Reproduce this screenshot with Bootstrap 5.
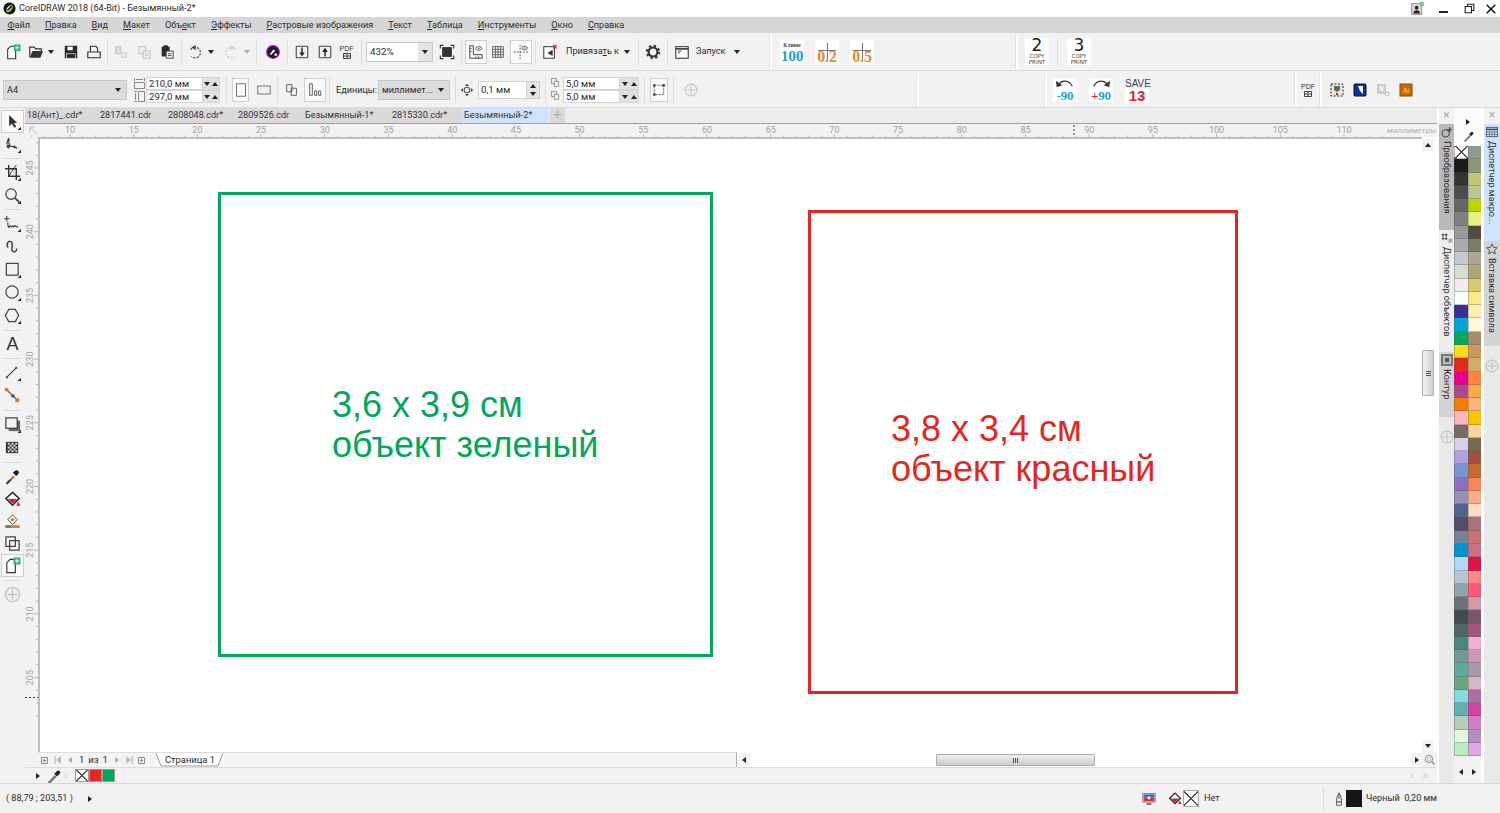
<!DOCTYPE html>
<html lang="ru">
<head>
<meta charset="utf-8">
<title>CorelDRAW 2018</title>
<link href="https://cdn.jsdelivr.net/npm/bootstrap@5.3.0/dist/css/bootstrap.min.css" rel="stylesheet">
<style>
html,body{height:813px;overflow:hidden;background:#f2f2f2}
body{font-family:Roboto,"Noto Sans",sans-serif;font-size:9.1px;line-height:1.15;color:#2a2a2a}
.ap-shell{height:813px;width:1500px}
.ap-title{height:17px;background:#fff;color:#2a2a2a;flex:none}
.ap-menu{height:16px;background:#d6d6d6;flex:none}
.ap-menu span{padding:0 7.5px;color:#2e2e2e}
.ap-menu u{text-underline-offset:1px}
.ap-tb{height:38px;background:#f2f2f2;border-bottom:1px solid #dcdcdc;flex:none}
.ap-tb2{height:37px;padding-top:2px}
.ap-i{display:flex;align-items:center;justify-content:center;flex:none;height:23px}
.ap-i svg{width:16px;height:16px;overflow:visible}
.ap-boxed{border:1px solid #cfcfcf;background:#fafafa;height:24px}
.ap-arrow{width:0;height:0;border-left:3px solid transparent;border-right:3px solid transparent;border-top:4px solid #222}
.ap-arrow-up{width:0;height:0;border-left:3px solid transparent;border-right:3px solid transparent;border-bottom:4px solid #222}
.ap-right{width:0;height:0;border-top:3px solid transparent;border-bottom:3px solid transparent;border-left:4px solid #222;flex:none}
.ap-left{width:0;height:0;border-top:3px solid transparent;border-bottom:3px solid transparent;border-right:4px solid #222}
.ap-sep{flex:none;height:26px;background:linear-gradient(#dcdcdc,#dcdcdc) center/1px 100% no-repeat}
.ap-grip{flex:none;width:3px;height:34px;background:#fff;border-left:1px solid #e4e4e4}
.ap-combo{height:20px;background:#fff;border:1px solid #c9c9c9;display:flex;align-items:center;flex:none;padding-left:3px;font-size:9.8px}
.ap-combo b{font-weight:400;flex:1}
.ap-combo i{width:14px;height:100%;background:#e4e4e4;display:flex;align-items:center;justify-content:center}
.ap-select{height:20px;background:#dcdcdc;border:1px solid #c9c9c9;display:flex;align-items:center;justify-content:space-between;padding:0 5px 0 3px;flex:none}
.ap-field{flex:none;background:#fff;height:13px;padding-left:2px;display:flex;align-items:center;border:1px solid #d4d4d4;font-size:9.6px}
.ap-spin{flex:none;height:13px;display:flex;align-items:center;justify-content:space-around;background:#e0e0e0;border:1px solid #d4d4d4;border-left:0}
.ap-spinv{flex:none;height:26px;display:flex;flex-direction:column;align-items:center;justify-content:space-around;background:#e4e4e4;border:1px solid #cfcfcf;border-left:0}
.ap-icon-cell{flex:none;width:24px;height:24px;background:#fff;position:relative;text-align:center}
.ap-copycell{height:27px}
.ap-serif{font-family:"Liberation Serif",serif;font-weight:700}
.ap-tiny{font-family:"Liberation Serif",serif;font-size:5.5px;line-height:6px;font-weight:700;color:#444;display:block;padding-top:2px}
.ap-big{font-size:15.5px;line-height:15px;color:#1ba1e2;display:block;margin-top:0;letter-spacing:-.2px}
.ap-orange{font-size:16px;line-height:15px;color:#f4861f;position:absolute;left:0;right:0;bottom:0;letter-spacing:-.2px}
.ap-cross{position:absolute;left:3px;right:3px;top:10px;height:1px;background:#777}
.ap-cross::after{content:"";position:absolute;left:9px;top:-7px;width:1px;height:18px;background:#777}
.ap-copy-n{font-family:"DejaVu Sans",sans-serif;font-size:17px;color:#222;display:block;height:15px;line-height:15px}
.ap-copy-t{font-family:"DejaVu Sans",sans-serif;font-size:5.6px;line-height:6px;color:#444;display:block}
.ap-rot{font-size:13px;line-height:13px;color:#1ba1e2;position:absolute;left:0;right:0;bottom:0;letter-spacing:-.2px}
.ap-save{font-family:"Liberation Sans",sans-serif;font-size:10px;line-height:11px;color:#444;display:block}
.ap-save13{font-family:"Liberation Sans",sans-serif;font-weight:700;font-size:15px;line-height:14px;color:#e8212e;background:#fff;display:block}
.ap-main{height:675px;flex:none}
.ap-tools{width:25px;flex:none;padding-top:2px;background:#f2f2f2}
.ap-tools .ap-i{width:25px}
.ap-tools .ap-i svg{width:17px;height:17px}
.ap-tools .ap-boxed{width:23px;height:23px;margin:0 auto}
.ap-t22{height:22px}
.ap-hsep{height:5px;flex:none;background:linear-gradient(#dcdcdc,#dcdcdc) center/17px 1px no-repeat}
.ap-hsep6{height:6px}
.ap-center{width:1412px;flex:none}
.ap-tabs{height:16px;background:#ececec;border-bottom:1px solid #56b5ee;flex:none}
.ap-tab{height:15px;flex:none;background:#d9d9d9;padding-left:2px;display:flex;align-items:center;color:#333;white-space:nowrap}
.ap-tab-on{background:#cfe3fb}
.ap-tab-add{width:15px;justify-content:center;margin-left:1px;padding:0;color:#aaa;font-size:14px}
.ap-ruler{height:13px;flex:none;background:#f2f2f2;display:block}
.ap-canvasrow{height:615px;flex:none}
.ap-vr{width:13px;flex:none;display:block;background:#f2f2f2}
.ap-canvas{width:1384px;flex:none;background:#fff;border-top:2px solid #bdbdbd;border-left:2px solid #bdbdbd;position:relative}
.ap-obj{position:absolute;border:3px solid;background:transparent}
.ap-obj-g{border-color:#00a85a;left:178px;top:53px;width:495px;height:465px}
.ap-obj-r{border-color:#e3281e;left:768px;top:71px;width:430px;height:484px}
.ap-label{position:absolute;font-family:"Liberation Sans",Arial,sans-serif;font-size:36px;line-height:40px;white-space:nowrap}
.ap-label-g{color:#00a85a;left:292px;top:246px}
.ap-label-r{color:#e3281e;left:851px;top:270px}
.ap-vscroll{width:15px;flex:none;background:#fff;position:relative}
.ap-sbtn{position:absolute;left:0;width:12px;height:12px;background:#f2f2f2;display:flex;align-items:center;justify-content:center}
.ap-sb-up{top:2px}.ap-sb-dn{bottom:0}
.ap-vthumb{position:absolute;left:0;top:213px;width:12px;height:46px;background:linear-gradient(90deg,#f4f4f4,#cfcfcf);border:1px solid #aeaeae;border-radius:1px;display:flex;align-items:center;justify-content:center}
.ap-grip3{width:5px;height:5px;background:repeating-linear-gradient(90deg,#555 0 1px,transparent 1px 2px)}
.ap-grip3v{background:repeating-linear-gradient(0deg,#555 0 1px,transparent 1px 2px)}
.ap-pager{height:15px;flex:none;background:#f2f2f2}
.ap-pagerl{width:699px;margin-left:13px;padding-left:1px;background:#f4f4f4;border-right:1px solid #aaa;border-top:1px solid #ddd;flex:none;color:#2a2a2a}
.ap-pgi{width:12.5px;flex:none;display:flex;align-items:center;justify-content:center;height:14px;color:#bbb}
.ap-pgtxt{font-size:9.6px;width:34px;flex:none;text-align:center;word-spacing:1.5px}
.ap-pagetab{position:relative;width:68px;flex:none;margin-left:8px;text-align:center;height:14px;background:#fff;line-height:13px;font-size:9.4px}
.ap-pagetab svg{position:absolute;left:0;top:0;width:68px;height:14px}
.ap-hbar{width:685px;flex:none;position:relative;background:#fff}
.ap-hthumb{position:absolute;left:199px;top:2px;width:159px;height:12px;background:linear-gradient(#f0f0f0,#cacaca);border:1px solid #aeaeae;border-radius:1px;display:flex;align-items:center;justify-content:center}
.ap-hl{position:absolute;left:1px;top:1px;width:12px;height:13px;background:#f2f2f2;display:flex;align-items:center;justify-content:center}
.ap-hr{position:absolute;right:0;top:1px;width:11px;height:13px;background:#f2f2f2;display:flex;align-items:center;justify-content:center}
.ap-zoomcell{width:15px;flex:none;display:flex;align-items:center;justify-content:center;background:#f2f2f2}
.ap-strip{height:16px;flex:none;background:#f2f2f2;border-top:1px solid #dcdcdc;padding-left:9px}
.ap-sw{width:13px;height:13px;flex:none;border:1px solid #999}
.ap-none{background:linear-gradient(45deg,transparent 46%,#555 46%,#555 54%,transparent 54%),linear-gradient(-45deg,transparent 46%,#555 46%,#555 54%,transparent 54%),#fff}
.ap-docks{width:63px;flex:none;background:#fff}
.ap-dock{flex:none;width:15px;margin-left:2px;background:#e9e9e9}
.ap-dock2{margin-left:3px;width:16px}
.ap-dockx{height:16px;flex:none;color:#aaa;text-align:center;font-size:12px;line-height:14px;background:#f2f2f2}
.ap-dtab{flex:none;writing-mode:vertical-rl;display:flex;align-items:center;justify-content:flex-start;font-size:9.2px;color:#2e2e2e;padding-top:2px;white-space:nowrap;gap:3px}
.ap-dtab svg{width:12px;height:12px;flex:none}
.ap-dplus{height:14px;flex:none;margin-top:13px;color:#bbb;display:flex;justify-content:center}
.ap-dplus svg{width:14px;height:14px}
.ap-pal{width:27px;flex:none;background:#f2f2f2}
.ap-palhead{height:38px;flex:none;background:#fbfbfb;display:flex;flex-direction:column;align-items:center;padding-top:11px;gap:5px}
.ap-grid{display:grid;grid-template-columns:13.5px 13.5px;grid-template-rows:repeat(46,13.28px);grid-auto-flow:column;height:611px;flex:none}
.ap-grid div{border:1px solid rgba(90,90,90,.35);border-width:0 0 1px 1px}
.ap-palfoot{flex:1;display:flex;justify-content:space-around;align-items:center;padding-top:3px}
.ap-status{height:30px;flex:none;background:#f2f2f2;border-top:1px solid #d8d8d8;color:#2a2a2a}
.ap-stx{width:16px;height:17px;flex:none;border:1px solid #aaa}
.wx-1{width:1px}.wx-2{width:2px}.wx-4{width:4px}.wx-5{width:5px}.wx-6{width:6px}.wx-8{width:8px}.wx-9{width:9px}.wx-10{width:10px}.wx-11{width:11px}.wx-12{width:12px}.wx-13{width:13px}.wx-14{width:14px}.wx-16{width:16px}.wx-17{width:17px}.wx-18{width:18px}.wx-19{width:19px}.wx-21{width:21px}.wx-22{width:22px}.wx-23{width:23px}.wx-24{width:24px}.wx-26{width:26px}.wx-28{width:28px}.wx-40{width:40px}.wx-49{width:49px}.wx-52{width:52px}.wx-57{width:57px}.wx-67{width:67px}.wx-68{width:68px}.wx-70{width:70px}.wx-72{width:72px}.wx-73{width:73px}.wx-78{width:78px}.wx-87{width:87px}.wx-119{width:119px}.wx-124{width:124px}
.wx-13,.wx-14,.wx-16,.wx-24,.wx-40,.wx-52,.wx-28,.wx-78,.wx-119{flex:none}
.lg-1{margin-left:1px}.lg-2{margin-left:2px}.lg-3{margin-left:3px}.lg-4{margin-left:4px}.lg-5{margin-left:5px}.lg-6{margin-left:6px}.lg-7{margin-left:7px}.lg-8{margin-left:8px}.lg-11{margin-left:11px}.lg-12{margin-left:12px}.lg-19{margin-left:19px}.lg-125{margin-left:125px}.lg-141{margin-left:141px}.lg-145{margin-left:145px}.lg-212{margin-left:212px}
.ht-14{height:14px}.ht-18{height:18px}.ht-24{height:24px}.ht-65{height:65px}.ht-105{height:105px}.ht-106{height:106px}.ht-117{height:117px}.ht-122{height:122px}
.op-40{opacity:.35}
.tl-logo{width:13px;height:13px}
.tl-ctl{width:15px;height:15px;margin-right:14px}
.tl-min{width:9px;height:2px;background:#222;margin-top:6px;margin-right:16px}
.tl-rest{width:11px;height:11px;margin-right:10px}
.tl-close{width:12px;height:12px;margin-right:3px}
.tx-pdf{font-size:7px;line-height:7px;font-family:"Liberation Sans",sans-serif;color:#333}
.ap-i svg.sv-pdf{width:8px;height:6px;margin-top:1px}
.sv-dim{width:13px;height:13px;flex:none}
.ap-i svg.sv-14,.sv-14{width:14px;height:14px;flex:none}
.sv-10{width:10px;height:10px}
.sv-12{width:12px;height:12px}
.sv-rot{position:absolute;left:0;top:0;width:24px;height:11px}
.tx-red{color:#e8212e}
.tool-a{font-family:"Liberation Sans",sans-serif;font-size:18px;color:#333}
.bg-swr{background:#e3281e}
.bg-swg{background:#00a85a}
.tx-chev{color:#ccc;font-size:12px;flex:none}
.tx-far{margin-right:9px}
.dt-grey{background:#b9b9b9}
.dt-light{background:#ededed}
.dt-mid{background:#d4d4d4}
.dt-blue{background:#cfe3fb}
.st-mon{margin-left:1050px}
.st-black{background:#151515;border-color:#151515}
</style>
</head>
<body>
<svg width="0" height="0" class="d-block position-absolute">
<defs>
<symbol id="i-new" viewBox="0 0 18 18"><path d="M3 16.500V6l3.500-3.500H12v14z" fill="#fff" stroke="#333" stroke-width="1.200"/><rect x="10" y="0.500" width="7.500" height="7.500" fill="#2fb56d"/><path d="M13.700 2v4.500M11.500 4.200H16" stroke="#fff"/></symbol>
<symbol id="i-open" viewBox="0 0 18 18"><path d="M2 15V3.500h5l1.500 2H15V8" fill="none" stroke="#333" stroke-width="1.300"/><path d="M2 15.500 5 8h12l-3 7.500z" fill="#333"/></symbol>
<symbol id="i-save" viewBox="0 0 18 18"><path d="M2 2h14v14H2z" fill="#2b2b2b"/><rect x="5" y="3" width="6" height="4" fill="#fff"/><rect x="4" y="11" width="10" height="5" fill="#2b2b2b" stroke="#fff" stroke-width=".7"/></symbol>
<symbol id="i-print" viewBox="0 0 18 18"><path d="M5 9V2.500h6l2 2V9M2 9h14v6.500H2z" fill="none" stroke="#333" stroke-width="1.300"/></symbol>
<symbol id="i-cut" viewBox="0 0 18 18"><path d="M3 3h6v8H3z" fill="#ddd" stroke="#bbb"/><path d="M10 10h5v5h-5z" fill="#eee" stroke="#ccc"/></symbol>
<symbol id="i-copy" viewBox="0 0 18 18"><path d="M3 3h8v8H3z" fill="#eee" stroke="#bbb"/><path d="M8 8h8v8H8zM10 11h4M10 13h4" fill="#f2f2f2" stroke="#bbb"/></symbol>
<symbol id="i-paste" viewBox="0 0 18 18"><path d="M3 3h9v11H3z" fill="#2b2b2b"/><rect x="5" y="1.500" width="5" height="3" fill="#2b2b2b"/><path d="M8 8h8v8H8z" fill="#eee" stroke="#444"/><path d="M10 11h4M10 13h4" stroke="#444"/></symbol>
<symbol id="i-undo" viewBox="0 0 18 18"><path d="M4 6.500A6 6 0 1 1 5 14" fill="none" stroke="#444" stroke-width="1.300" stroke-dasharray="2.500 1.500"/><path d="M9.500 1 5 4l5 3z" fill="#444"/></symbol>
<symbol id="i-redo" viewBox="0 0 18 18"><path d="M14 6.500A6 6 0 1 0 13 14" fill="none" stroke="#ccc" stroke-width="1.300" stroke-dasharray="2.500 1.500"/><path d="M8.500 1 13 4 8 7z" fill="#ccc"/></symbol>
<symbol id="i-color" viewBox="0 0 18 18"><circle cx="9" cy="9" r="7" fill="#1c1c1c" stroke="#a100c8" stroke-width="1.500"/><path d="M5 11c3 0 2-4 5-4.500 2 0 1 2.500-1 3.500l-2 2.500z" fill="#fff"/><circle cx="12" cy="12" r="1.500" fill="#fff"/></symbol>
<symbol id="i-import" viewBox="0 0 18 18"><rect x="2.500" y="2.500" width="13" height="13" rx="1" fill="none" stroke="#444" stroke-width="1.200"/><path d="M9 4v6" stroke="#222" stroke-width="1.600"/><path d="M6 9.500h6L9 14z" fill="#222"/></symbol>
<symbol id="i-export" viewBox="0 0 18 18"><rect x="2.500" y="2.500" width="13" height="13" rx="1" fill="none" stroke="#444" stroke-width="1.200"/><path d="M9 9v5" stroke="#222" stroke-width="1.600"/><path d="M6 9h6L9 4z" fill="#222"/></symbol>
<symbol id="i-full" viewBox="0 0 18 18"><path d="M1.500 5V1.500H5M13 1.500h3.500V5M16.500 13v3.500H13M5 16.500H1.500V13" fill="none" stroke="#333" stroke-width="1.300"/><rect x="3.500" y="3.500" width="11" height="11" fill="#333"/></symbol>
<symbol id="i-rulers" viewBox="0 0 18 18"><path d="M2 2h4v10h10v4H2z" fill="none" stroke="#444" stroke-width="1.100"/><path d="M2 5h2M2 8h2M9 14v2M12 14v2" stroke="#444"/><ellipse cx="12" cy="5" rx="3.500" ry="2" fill="none" stroke="#555"/><circle cx="12" cy="5" r=".9" fill="#555"/></symbol>
<symbol id="i-grid" viewBox="0 0 18 18"><path d="M3 3h12v12H3zM6 3v12M9 3v12M12 3v12M3 6h12M3 9h12M3 12h12" fill="#fff" stroke="#555"/></symbol>
<symbol id="i-guides" viewBox="0 0 18 18"><path d="M8 1v16M1 9h16" stroke="#555" stroke-dasharray="2 1.500"/><ellipse cx="13" cy="4.500" rx="3.200" ry="2" fill="#fff" stroke="#555"/><circle cx="13" cy="4.500" r=".9" fill="#555"/></symbol>
<symbol id="i-snap" viewBox="0 0 18 18"><rect x="2" y="3" width="12" height="13" fill="#fff" stroke="#444" stroke-width="1.200"/><path d="m6 10 6-3.500v7z" fill="#333"/><path d="m12.500 1 4 4M16.500 1l-4 4" stroke="#e02020" stroke-width="1.400"/></symbol>
<symbol id="i-gear" viewBox="0 0 18 18"><circle cx="9" cy="9" r="5" fill="none" stroke="#333" stroke-width="2.400"/><circle cx="9" cy="9" r="7" fill="none" stroke="#333" stroke-width="2.200" stroke-dasharray="2.600 2.900"/></symbol>
<symbol id="i-run" viewBox="0 0 18 18"><rect x="2" y="3" width="14" height="13" fill="#fff" stroke="#333" stroke-width="1.200"/><path d="M2 5.500h14" stroke="#333" stroke-width="1.800"/><path d="M4.500 8h4M4.500 10h2" stroke="#333"/></symbol>
<symbol id="i-pw" viewBox="0 0 18 18"><rect x="4" y="2" width="10" height="14" fill="none" stroke="#666"/></symbol>
<symbol id="i-pl" viewBox="0 0 18 18"><rect x="2" y="4.500" width="14" height="9" fill="none" stroke="#666"/></symbol>
<symbol id="i-pages" viewBox="0 0 18 18"><path d="M3 3h6v8H3zM8 7h6v8H8z" fill="#f2f2f2" stroke="#555"/></symbol>
<symbol id="i-bars" viewBox="0 0 18 18"><path d="M3 2h3v13H3zM8.500 10H11v5H8.500zM13 10h2.500v5H13z" fill="none" stroke="#555"/></symbol>
<symbol id="i-nudge" viewBox="0 0 18 18"><circle cx="9" cy="9" r="3.500" fill="none" stroke="#555" stroke-width="1.300"/><path d="M9 1 6.500 4h5zM9 17l-2.500-3h5zM1 9l3-2.500v5zM17 9l-3-2.500v5z" fill="#444"/></symbol>
<symbol id="i-dup" viewBox="0 0 18 18"><path d="M2 2h7v7H2z" fill="none" stroke="#777"/><path d="M6 6h6v7H6z" fill="#f2f2f2" stroke="#777"/></symbol>
<symbol id="i-treat" viewBox="0 0 18 18"><rect x="3" y="3" width="12" height="12" fill="#fff" stroke="#333" stroke-dasharray="2.500 1.500"/><path d="M1.500 1.500h3v3h-3zM13.500 1.500h3v3h-3zM1.500 13.500h3v3h-3z" fill="#333"/></symbol>
<symbol id="i-plus" viewBox="0 0 18 18"><circle cx="9" cy="9" r="7.500" fill="none" stroke="#c4c4c4" stroke-width="1.500"/><path d="M9 3.500v11M3.500 9h11" stroke="#c4c4c4" stroke-width="1.500"/></symbol>
<symbol id="i-pick" viewBox="0 0 18 18"><path d="M5.500 2v12l3-2.500 2.500 4 2-1-2.500-4H14z" fill="#333"/><path d="M18 14.500V18h-3.500z" fill="#222"/></symbol>
<symbol id="i-shape" viewBox="0 0 18 18"><path d="M3 9c0-4 2-6 2-7 1 3-1 5 1 8 2 2 5 1 8 3" fill="none" stroke="#333" stroke-width="1.200"/><path d="M4 9 6.500 11 5 13.500 2.500 11.500z" fill="#333"/><path d="m10 9 3 3-1.500 1.500z" fill="#333"/><path d="M18 14.500V18h-3.500z" fill="#222"/></symbol>
<symbol id="i-crop" viewBox="0 0 18 18"><path d="M5 1v12h12M1 5h12v12" fill="none" stroke="#333" stroke-width="1.500"/><path d="m13 1-8 12" stroke="#333"/><path d="M18 14.500V18h-3.500z" fill="#222"/></symbol>
<symbol id="i-zoom" viewBox="0 0 18 18"><circle cx="7.500" cy="7.500" r="5.500" fill="none" stroke="#444" stroke-width="1.300"/><path d="m11.500 11.500 4.500 4.500" stroke="#444" stroke-width="2"/><path d="M18 14.500V18h-3.500z" fill="#222"/></symbol>
<symbol id="i-free" viewBox="0 0 18 18"><path d="M3 1v6M0 4h6" stroke="#333"/><path d="M4 8c0 5 1 6 2 4s1 2 2.500 0 1 2 2.500 0 1 1 4 .5" fill="none" stroke="#333" stroke-width="1.200"/><path d="M18 14.500V18h-3.500z" fill="#222"/></symbol>
<symbol id="i-art" viewBox="0 0 18 18"><path d="M5 11c-3-3 0-8 3-6 3 2 0 6 1 9 1 3 5 2 5-2" transform="translate(-.5 -1)" fill="none" stroke="#333" stroke-width="1.400"/></symbol>
<symbol id="i-rect" viewBox="0 0 18 18"><rect x="2.500" y="2.500" width="12.500" height="12.500" fill="none" stroke="#444" stroke-width="1.300"/><path d="M18 14.500V18h-3.500z" fill="#222"/></symbol>
<symbol id="i-ell" viewBox="0 0 18 18"><circle cx="8.500" cy="8.500" r="6.500" fill="none" stroke="#444" stroke-width="1.300"/><path d="M18 14.500V18h-3.500z" fill="#222"/></symbol>
<symbol id="i-poly" viewBox="0 0 18 18"><path d="M5 2.500h7l3.500 6.500-3.500 6.500H5L1.500 9z" fill="none" stroke="#444" stroke-width="1.300"/><path d="M18 14.500V18h-3.500z" fill="#222"/></symbol>
<symbol id="i-line" viewBox="0 0 18 18"><path d="m3 14 10-10" stroke="#444" stroke-width="1.200"/><path d="M2 13h2v2H2zM12 3h2v2h-2z" fill="#444"/><path d="M18 14.500V18h-3.500z" fill="#222"/></symbol>
<symbol id="i-conn" viewBox="0 0 18 18"><path d="m3 3 11 11" stroke="#444" stroke-width="1.200"/><rect x="1" y="1" width="3.500" height="3.500" fill="#e8720c"/><rect x="8" y="8" width="3" height="3" fill="#444"/><rect x="12" y="12" width="4" height="4" fill="#e8720c"/></symbol>
<symbol id="i-shadow" viewBox="0 0 18 18"><rect x="5" y="5" width="12" height="11" fill="#666"/><rect x="2" y="2" width="12" height="11" fill="#f2f2f2" stroke="#333" stroke-width="1.200"/><path d="M18 14.500V18h-3.500z" fill="#222"/></symbol>
<symbol id="i-trans" viewBox="0 0 18 18"><path d="M2 3h13v12H2z" fill="#333"/><path d="M4 4h2v2H4zM8 4h2v2H8zM12 4h2v2h-2zM6 6h2v2H6zM10 6h2v2h-2zM4 8h2v2H4zM8 8h2v2H8zM12 8h2v2h-2zM6 10h2v2H6zM10 10h2v2h-2zM4 12h2v2H4zM8 12h2v2H8zM12 12h2v2h-2z" fill="#ddd"/></symbol>
<symbol id="i-drop" viewBox="0 0 18 18"><path d="m2 16 8-8 1.500 1.500-8 8z" fill="#c8642c"/><path d="m2 16 4-4 1.500 1.500-4 4z" fill="#444"/><path d="m9.500 5 2-2c1-1 2.500-1 3.500 0s1 2.500 0 3.500l-2 2z" fill="#222"/></symbol>
<symbol id="i-fill" viewBox="0 0 18 18"><path d="M9 1.500 16 8l-7 7-7-7z" fill="#fff" stroke="#222" stroke-width="1.600"/><path d="M4 8.500h10L9 13.500z" fill="#e02020"/><path d="M15 11l2.500 4.500H13z" fill="#e02020"/></symbol>
<symbol id="i-smart" viewBox="0 0 18 18"><path d="M9 2 14 7l-5 5-5-5z" fill="#fff" stroke="#444"/><circle cx="9" cy="7" r="1.800" fill="#e8720c"/><rect x="1.500" y="13" width="15" height="2.800" fill="#e8720c"/><path d="M1.500 13h6v2.800h-6z" fill="#777"/></symbol>
<symbol id="i-combine" viewBox="0 0 18 18"><rect x="2" y="2" width="10" height="10" fill="none" stroke="#333" stroke-width="1.200"/><rect x="6" y="6" width="10" height="10" fill="none" stroke="#333" stroke-width="1.200"/></symbol>
<symbol id="i-tr" viewBox="0 0 18 18"><circle cx="7" cy="11" r="5.500" fill="none" stroke="#333" stroke-width="1.300"/><path d="M13 2v7M9.500 5.500h7" stroke="#333" stroke-width="1.600"/></symbol>
<symbol id="i-oman" viewBox="0 0 18 18"><path d="M2 3h2v2H2zM7 3h2v2H7zM2 9h2v2H2zM7 9h2v2H7zM4 4h3M3 5v4M8 5v4M4 10h3" stroke="#444" fill="#444"/><path d="M11 10h6v6h-6z" fill="#aaa"/></symbol>
<symbol id="i-contour" viewBox="0 0 18 18"><rect width="18" height="18" fill="#777"/><rect x="3" y="3" width="12" height="12" fill="#bbb"/><rect x="6" y="6" width="6" height="6" fill="#555"/></symbol>
<symbol id="i-macro" viewBox="0 0 18 18"><rect x="1" y="2" width="16" height="14" fill="#cfe3fb" stroke="#345" stroke-width="1.200"/><path d="M1 5h16" stroke="#345" stroke-width="2"/><path d="M5 5v11M9 5v11M13 5v11M1 9h16M1 12.500h16" stroke="#345" stroke-width=".8"/></symbol>
<symbol id="i-star" viewBox="0 0 18 18"><path d="m9 1.500 2.300 5 5.500.6-4.100 3.700 1.200 5.500L9 13.500l-4.900 2.800 1.200-5.500L1.200 7.100l5.500-.6z" fill="none" stroke="#444" stroke-width="1.300"/></symbol>
<symbol id="i-mon" viewBox="0 0 18 18"><rect x="1" y="2" width="16" height="11" fill="#fff" stroke="#666"/><rect x="2" y="3" width="14" height="4" fill="#2a6ecb"/><rect x="2" y="7" width="14" height="5" fill="#e02a2a"/><circle cx="9" cy="7.500" r="2" fill="#dfeeff"/><path d="M6 15.500h6" stroke="#555" stroke-width="2"/></symbol>
<symbol id="i-pen" viewBox="0 0 18 18"><path d="M9 1 6 8v5h6V8z" fill="#eee" stroke="#333"/><path d="M9 3v6" stroke="#333"/><rect x="6" y="13" width="6" height="4" fill="#fff" stroke="#333"/></symbol>
<symbol id="i-eye" viewBox="0 0 18 18"><path d="m3 16 8-8 2 2-8 8z" fill="#777"/><path d="m10.500 6.500 3-3c1-1 2-1 3 0s1 2 0 3l-3 3z" fill="#222"/></symbol>
<symbol id="i-user" viewBox="0 0 18 18"><rect x="2" y="3" width="12" height="13" fill="#d8d8d8" stroke="#888"/><circle cx="8" cy="8" r="2.200" fill="#222"/><path d="M4 15c0-3 2-4 4-4s4 1 4 4z" fill="#222"/><circle cx="14" cy="3.500" r="3" fill="#6fd08c"/></symbol>
<symbol id="i-zoomfit" viewBox="0 0 18 18"><circle cx="7.500" cy="7.500" r="5.500" fill="none" stroke="#777" stroke-width="1.200"/><path d="M5 5.500h5v4H5z" fill="none" stroke="#777" stroke-dasharray="1 1"/><path d="m11.500 11.500 4.500 4" stroke="#777" stroke-width="1.800"/></symbol>
</defs>
</svg>

<div class="ap-shell d-flex flex-column">

  <div class="ap-title d-flex align-items-center">
    <svg class="lg-3 flex-shrink-0 tl-logo" viewBox="0 0 14 14"><circle cx="7" cy="7" r="6.500" fill="#111"/><path d="M3 10c3-1 6-3 8-7 0 5-3 8-6 8.500z" fill="#8bc53f"/><path d="M3 10c1-4 3-6 7-7.500-2 2-4 4-7 7.500z" fill="#fff"/></svg>
    <span class="lg-3">CorelDRAW 2018 (64-Bit) - Безымянный-2*</span>
    <svg class="ms-auto tl-ctl" viewBox="0 0 18 18"><use href="#i-user"/></svg>
    <span class="tl-min"></span>
    <svg class="tl-rest" viewBox="0 0 14 14"><path d="M4.500 4V1.500h8v8H10M1.500 4.500h8v8h-8z" fill="none" stroke="#222" stroke-width="1.400"/></svg>
    <svg class="tl-close" viewBox="0 0 14 14"><path d="m2 2 10 10M12 2 2 12" stroke="#111" stroke-width="1.700"/></svg>
  </div>

  <div class="ap-menu d-flex align-items-center">
    <span><u>Ф</u>айл</span><span><u>П</u>равка</span><span><u>В</u>ид</span><span><u>М</u>акет</span><span>Объ<u>е</u>кт</span><span><u>Э</u>ффекты</span><span><u>Р</u>астровые изображения</span><span><u>Т</u>екст</span><span><u>Т</u>аблица</span><span><u>И</u>нструменты</span><span><u>О</u>кно</span><span><u>С</u>правка</span>
  </div>

  <div class="ap-tb d-flex align-items-center">
    <div class="ap-i wx-23 lg-1"><svg><use href="#i-new"/></svg></div>
    <div class="ap-i wx-23"><svg><use href="#i-open"/></svg></div>
    <div class="ap-i wx-8"><i class="ap-arrow"></i></div>
    <div class="ap-i wx-23 lg-4"><svg><use href="#i-save"/></svg></div>
    <div class="ap-i wx-23"><svg><use href="#i-print"/></svg></div>
    <div class="ap-sep wx-5"></div>
    <div class="ap-i wx-22"><svg><use href="#i-cut"/></svg></div>
    <div class="ap-i wx-23"><svg><use href="#i-copy"/></svg></div>
    <div class="ap-i wx-23"><svg><use href="#i-paste"/></svg></div>
    <div class="ap-sep wx-6"></div>
    <div class="ap-i wx-22"><svg><use href="#i-undo"/></svg></div>
    <div class="ap-i wx-10"><i class="ap-arrow"></i></div>
    <div class="ap-i wx-22 lg-4"><svg><use href="#i-redo"/></svg></div>
    <div class="ap-i wx-10"><i class="ap-arrow op-40"></i></div>
    <div class="ap-sep wx-9"></div>
    <div class="ap-i wx-23"><svg><use href="#i-color"/></svg></div>
    <div class="ap-sep wx-6"></div>
    <div class="ap-i wx-23"><svg><use href="#i-import"/></svg></div>
    <div class="ap-i wx-23"><svg><use href="#i-export"/></svg></div>
    <div class="ap-i wx-21 flex-column"><span class="tx-pdf">PDF</span><svg class="sv-pdf" viewBox="0 0 8 6"><path d="M.5.500h7v5h-7zM4 .5v5M.5 3h7" fill="none" stroke="#444"/></svg></div>
    <div class="ap-sep wx-9"></div>
    <div class="ap-combo wx-67"><b>432%</b><i><span class="ap-arrow"></span></i></div>
    <div class="ap-i wx-22 lg-3"><svg><use href="#i-full"/></svg></div>
    <div class="ap-sep wx-6"></div>
    <div class="ap-i wx-22 lg-1 ap-boxed"><svg><use href="#i-rulers"/></svg></div>
    <div class="ap-i wx-22"><svg><use href="#i-grid"/></svg></div>
    <div class="ap-i wx-22 lg-1 ap-boxed"><svg><use href="#i-guides"/></svg></div>
    <div class="ap-sep wx-6"></div>
    <div class="ap-i wx-23"><svg><use href="#i-snap"/></svg></div>
    <span class="lg-5 wx-52 text-nowrap">Привяза<u>т</u>ь к</span>
    <div class="ap-i wx-18"><i class="ap-arrow"></i></div>
    <div class="ap-sep wx-4"></div>
    <div class="ap-i wx-26"><svg><use href="#i-gear"/></svg></div>
    <div class="ap-sep wx-2"></div>
    <div class="ap-i wx-28"><svg><use href="#i-run"/></svg></div>
    <span class="wx-28 text-nowrap">Запуск</span>
    <div class="ap-i wx-26"><i class="ap-arrow"></i></div>
    <div class="ap-grip lg-19"></div>
    <div class="ap-icon-cell lg-8"><span class="ap-tiny">Клише</span><span class="ap-big ap-serif">100</span></div>
    <div class="ap-icon-cell lg-11"><i class="ap-cross"></i><span class="ap-orange ap-serif">0.2</span></div>
    <div class="ap-icon-cell lg-11"><i class="ap-cross"></i><span class="ap-orange ap-serif">0.5</span></div>
    <div class="ap-grip lg-141"></div>
    <div class="ap-icon-cell ap-copycell lg-7"><span class="ap-copy-n">2</span><span class="ap-copy-t">COPY<br>PRINT</span></div>
    <div class="ap-sep wx-16"></div>
    <div class="ap-icon-cell ap-copycell lg-2"><span class="ap-copy-n">3</span><span class="ap-copy-t">COPY<br>PRINT</span></div>
  </div>

  <div class="ap-tb ap-tb2 d-flex align-items-center">
    <div class="ap-select wx-124 lg-3"><span>A4</span><span class="ap-arrow"></span></div>
    <div class="d-flex flex-column lg-6">
      <svg class="sv-dim" viewBox="0 0 13 13"><path d="M1.500 1v3M11.500 1v3M3 2.500h7M1.500 5.500h10v6h-10z" fill="none" stroke="#888"/></svg>
      <svg class="sv-dim" viewBox="0 0 13 13"><path d="M1 1.500h3M1 11.500h3M2.500 3v7M5.500 1.500h6v10h-6z" fill="none" stroke="#888"/></svg>
    </div>
    <div class="d-flex flex-column">
      <div class="d-flex"><div class="ap-field wx-57">210,0 мм</div><div class="ap-spin wx-17"><i class="ap-arrow"></i><i class="ap-arrow-up"></i></div></div>
      <div class="d-flex"><div class="ap-field wx-57">297,0 мм</div><div class="ap-spin wx-17"><i class="ap-arrow"></i><i class="ap-arrow-up"></i></div></div>
    </div>
    <div class="ap-sep wx-12"></div>
    <div class="ap-i wx-17 ap-boxed"><svg><use href="#i-pw"/></svg></div>
    <div class="ap-i wx-23 lg-3"><svg><use href="#i-pl"/></svg></div>
    <div class="ap-sep wx-4"></div>
    <div class="ap-i wx-23 lg-1"><svg><use href="#i-pages"/></svg></div>
    <div class="ap-i wx-22 lg-1 ap-boxed"><svg><use href="#i-bars"/></svg></div>
    <div class="ap-sep wx-6"></div>
    <span class="lg-4 wx-40 text-nowrap">Единицы:</span>
    <div class="ap-select wx-72 lg-2"><span class="text-nowrap">миллимет...</span><span class="ap-arrow"></span></div>
    <div class="ap-sep wx-10"></div>
    <div class="ap-i wx-14"><svg class="sv-14"><use href="#i-nudge"/></svg></div>
    <div class="ap-field wx-49 lg-4 ht-18">0,1 мм</div>
    <div class="ap-spinv wx-13 ht-18"><i class="ap-arrow-up"></i><i class="ap-arrow"></i></div>
    <div class="ap-sep wx-10"></div>
    <div class="d-flex flex-column wx-13">
      <svg class="sv-dim" viewBox="0 0 18 18"><use href="#i-dup"/></svg>
      <svg class="sv-dim" viewBox="0 0 18 18"><use href="#i-dup"/></svg>
    </div>
    <div class="d-flex flex-column">
      <div class="d-flex"><div class="ap-field wx-57">5,0 мм</div><div class="ap-spin wx-19"><i class="ap-arrow"></i><i class="ap-arrow-up"></i></div></div>
      <div class="d-flex"><div class="ap-field wx-57">5,0 мм</div><div class="ap-spin wx-19"><i class="ap-arrow"></i><i class="ap-arrow-up"></i></div></div>
    </div>
    <div class="ap-sep wx-11"></div>
    <div class="ap-i wx-18 ap-boxed"><svg class="sv-14"><use href="#i-treat"/></svg></div>
    <div class="ap-sep wx-10"></div>
    <div class="ap-i wx-26"><svg class="sv-14"><use href="#i-plus"/></svg></div>
    <div class="ap-grip lg-212"></div>
    <div class="ap-grip lg-125"></div>
    <div class="ap-icon-cell lg-6">
      <svg class="sv-rot" viewBox="0 0 24 12"><path d="M20 9C16 2 9 2 5 7" fill="none" stroke="#333" stroke-width="1.300"/><path d="m2 3 1 7 6-2z" fill="#333"/></svg>
      <span class="ap-rot ap-serif">-90</span></div>
    <div class="ap-icon-cell lg-12">
      <svg class="sv-rot" viewBox="0 0 24 12"><path d="M4 9c4-7 11-7 15-2" fill="none" stroke="#333" stroke-width="1.300"/><path d="m22 3-1 7-6-2z" fill="#333"/></svg>
      <span class="ap-rot ap-serif"><span class="tx-red">+</span>90</span></div>
    <div class="wx-24 lg-12 text-center"><span class="ap-save">SAVE</span><span class="ap-save13">13</span></div>
    <div class="ap-grip lg-145"></div>
    <div class="ap-i wx-22 flex-column"><span class="tx-pdf">PDF</span><svg class="sv-pdf" viewBox="0 0 8 6"><path d="M.5.500h7v5h-7zM4 .5v5M.5 3h7" fill="none" stroke="#444"/></svg></div>
    <div class="ap-grip"></div>
    <div class="ap-i wx-23 lg-3"><svg class="sv-14" viewBox="0 0 14 14"><rect x="1" y="1" width="12" height="12" fill="#e8e8e8" stroke="#222" stroke-dasharray="2 1.500"/><path d="M4 3h6v4l-3 2-3-2z" fill="#59703a"/><rect x="6" y="10" width="2" height="2" fill="#e01010"/></svg></div>
    <div class="ap-i wx-23"><svg class="sv-14" viewBox="0 0 14 14"><rect x="1" y="1" width="12" height="12" rx="1" fill="#0a2fa8" stroke="#111"/><path d="M5 3h5v8L7 8z" fill="#fff"/></svg></div>
    <div class="ap-i wx-23"><svg class="sv-14" viewBox="0 0 14 14"><rect x="1" y="1" width="9" height="10" fill="#ccc"/><rect x="3.500" y="3" width="4" height="5" fill="#eee"/><circle cx="11" cy="11" r="2" fill="none" stroke="#bbb"/></svg></div>
    <div class="ap-i wx-23"><svg class="sv-14" viewBox="0 0 14 14"><rect x="1" y="1" width="12" height="12" fill="#c8690a" stroke="#8a4a06"/><text x="7" y="10" text-anchor="middle" font-size="7" font-family="Liberation Sans" fill="#ffd24a">Ai</text></svg></div>
  </div>

  <div class="ap-main d-flex">
    <div class="ap-tools d-flex flex-column">
      <div class="ap-i ap-boxed"><svg><use href="#i-pick"/></svg></div>
      <div class="ap-i"><svg><use href="#i-shape"/></svg></div>
      <div class="ap-hsep"></div>
      <div class="ap-i"><svg><use href="#i-crop"/></svg></div>
      <div class="ap-i"><svg><use href="#i-zoom"/></svg></div>
      <div class="ap-hsep"></div>
      <div class="ap-i"><svg><use href="#i-free"/></svg></div>
      <div class="ap-i"><svg><use href="#i-art"/></svg></div>
      <div class="ap-i"><svg><use href="#i-rect"/></svg></div>
      <div class="ap-i"><svg><use href="#i-ell"/></svg></div>
      <div class="ap-i"><svg><use href="#i-poly"/></svg></div>
      <div class="ap-hsep ap-hsep6"></div>
      <div class="ap-i tool-a">A</div>
      <div class="ap-hsep"></div>
      <div class="ap-i"><svg><use href="#i-line"/></svg></div>
      <div class="ap-i"><svg><use href="#i-conn"/></svg></div>
      <div class="ap-hsep ap-hsep6"></div>
      <div class="ap-i"><svg><use href="#i-shadow"/></svg></div>
      <div class="ap-i"><svg><use href="#i-trans"/></svg></div>
      <div class="ap-hsep ap-hsep6"></div>
      <div class="ap-i"><svg><use href="#i-drop"/></svg></div>
      <div class="ap-i ap-t22"><svg><use href="#i-fill"/></svg></div>
      <div class="ap-i ap-t22"><svg><use href="#i-smart"/></svg></div>
      <div class="ap-i ap-t22"><svg><use href="#i-combine"/></svg></div>
      <div class="ap-i ap-boxed"><svg><use href="#i-new"/></svg></div>
      <div class="ap-hsep ap-hsep6"></div>
      <div class="ap-i"><svg><use href="#i-plus"/></svg></div>
    </div>

    <div class="ap-center d-flex flex-column">
      <div class="ap-tabs d-flex">
        <div class="ap-tab wx-73">18(Ант)_.cdr*</div>
        <div class="ap-tab wx-68">2817441.cdr</div>
        <div class="ap-tab wx-70">2808048.cdr*</div>
        <div class="ap-tab wx-67">2809526.cdr</div>
        <div class="ap-tab wx-87">Безымянный-1*</div>
        <div class="ap-tab wx-72">2815330.cdr*</div>
        <div class="ap-tab ap-tab-on wx-87">Безымянный-2*</div>
        <div class="ap-tab ap-tab-add">+</div>
      </div>
      <svg id="hr" class="ap-ruler" width="1412" height="13"></svg>
      <div class="ap-canvasrow d-flex">
        <svg id="vr" class="ap-vr" width="13" height="615"></svg>
        <div class="ap-canvas">
          <div class="ap-obj ap-obj-g"></div>
          <div class="ap-obj ap-obj-r"></div>
          <div class="ap-label ap-label-g">3,6 x 3,9 см<br>объект зеленый</div>
          <div class="ap-label ap-label-r">3,8 x 3,4 см<br>объект красный</div>
        </div>
        <div class="ap-vscroll">
          <div class="ap-sbtn ap-sb-up"><i class="ap-arrow-up"></i></div>
          <div class="ap-vthumb"><i class="ap-grip3 ap-grip3v"></i></div>
          <div class="ap-sbtn ap-sb-dn"><i class="ap-arrow"></i></div>
        </div>
      </div>
      <div class="ap-pager d-flex">
        <div class="ap-pagerl d-flex align-items-center">
          <div class="ap-pgi"><svg class="sv-10" viewBox="0 0 10 10"><path d="M1.500 2.500h6v6h-6zM4.500 4v3M3 5.500h3" fill="none" stroke="#888"/></svg></div>
          <div class="ap-pgi"><svg class="sv-10" viewBox="0 0 10 10"><path d="M2 1v8" stroke="#aaa"/><path d="M8 1v8L3 5z" fill="#bbb"/></svg></div>
          <div class="ap-pgi"><i class="ap-left op-40"></i></div>
          <div class="ap-pgtxt">1 из 1</div>
          <div class="ap-pgi"><i class="ap-right op-40"></i></div>
          <div class="ap-pgi"><svg class="sv-10" viewBox="0 0 10 10"><path d="M8 1v8" stroke="#aaa"/><path d="M2 1v8l5-4z" fill="#bbb"/></svg></div>
          <div class="ap-pgi"><svg class="sv-10" viewBox="0 0 10 10"><path d="M1.500 2.500h6v6h-6zM4.500 4v3M3 5.500h3" fill="none" stroke="#888"/></svg></div>
          <div class="ap-pagetab"><svg viewBox="0 0 68 14"><path d="M0 0l5 13h57l5-13" fill="none" stroke="#9a9a9a"/></svg><span class="position-relative">Страница 1</span></div>
        </div>
        <div class="ap-hbar">
          <div class="ap-hl"><i class="ap-left"></i></div>
          <div class="ap-hthumb"><i class="ap-grip3"></i></div>
          <div class="ap-hr"><i class="ap-right"></i></div>
        </div>
        <div class="ap-zoomcell"><svg class="sv-12" viewBox="0 0 18 18"><use href="#i-zoomfit"/></svg></div>
      </div>
      <div class="ap-strip d-flex align-items-center">
        <div class="ap-i wx-8 ht-14"><i class="ap-right"></i></div>
        <div class="ap-i wx-22 ht-14"><svg class="sv-12" viewBox="0 0 18 18"><use href="#i-eye"/></svg></div>
        <span class="wx-11 tx-chev">‹</span>
        <div class="ap-sw ap-none wx-14"></div>
        <div class="ap-sw bg-swr"></div>
        <div class="ap-sw bg-swg"></div>
        <span class="ms-auto tx-chev tx-far">› &nbsp; »</span>
      </div>
    </div>

    <div class="ap-docks d-flex">
      <div class="ap-dock d-flex flex-column">
        <div class="ap-dockx">×</div>
        <div class="ap-dtab ht-106 dt-grey"><svg viewBox="0 0 18 18"><use href="#i-tr"/></svg><span>Преобразования</span></div>
        <div class="ap-dtab ht-122 dt-light"><svg viewBox="0 0 18 18"><use href="#i-oman"/></svg><span>Диспетчер объектов</span></div>
        <div class="ap-dtab ht-65 dt-mid"><svg viewBox="0 0 18 18"><use href="#i-contour"/></svg><span>Контур</span></div>
        <div class="ap-dplus"><svg viewBox="0 0 18 18"><use href="#i-plus"/></svg></div>
      </div>
      <div class="ap-pal d-flex flex-column">
        <div class="ap-palhead"><i class="ap-right"></i><svg class="sv-12" viewBox="0 0 18 18"><use href="#i-eye"/></svg></div>
        <div class="ap-grid" id="pal"></div>
        <div class="ap-palfoot"><i class="ap-left"></i><i class="ap-right"></i></div>
      </div>
      <div class="ap-dock ap-dock2 d-flex flex-column">
        <div class="ap-dockx">×</div>
        <div class="ap-dtab ht-117 dt-blue"><svg viewBox="0 0 18 18"><use href="#i-macro"/></svg><span>Диспетчер макро...</span></div>
        <div class="ap-dtab ht-105 dt-mid"><svg viewBox="0 0 18 18"><use href="#i-star"/></svg><span>Вставка символа</span></div>
        <div class="ap-dplus"><svg viewBox="0 0 18 18"><use href="#i-plus"/></svg></div>
      </div>
    </div>
  </div>

  <div class="ap-status d-flex align-items-center">
    <span class="lg-6 wx-78">( 88,79 ; 203,51 )</span>
    <i class="ap-right lg-4"></i>
    <svg class="sv-14 st-mon" viewBox="0 0 18 18"><use href="#i-mon"/></svg>
    <svg class="sv-14 lg-12" viewBox="0 0 18 18"><use href="#i-fill"/></svg>
    <div class="ap-stx ap-none lg-1"></div>
    <span class="lg-5 wx-119">Нет</span>
    <div class="ap-sep wx-1 ht-24"></div>
    <svg class="sv-14 lg-8" viewBox="0 0 18 18"><use href="#i-pen"/></svg>
    <div class="ap-stx st-black"></div>
    <span class="lg-4 text-nowrap">Черный &nbsp;0,20 мм</span>
  </div>
</div>

<script>
(function(){
var NS='http://www.w3.org/2000/svg';
function el(p,n,a,t){var e=document.createElementNS(NS,n);for(var k in a)e.setAttribute(k,a[k]);if(t!=null)e.textContent=t;p.appendChild(e);return e;}
var hr=document.getElementById('hr'),vr=document.getElementById('vr'),S=12.74;
el(hr,'path',{d:'M5 3h5M5 3v5M5 3l7 7',stroke:'#bbb',fill:'none'});
for(var m=6;m<=114;m++){
  var x=70-25+(m-10)*S,big=m%5===0;
  if(x>1360)continue;
  el(hr,'line',{x1:x,x2:x,y1:big?10:11.5,y2:13,stroke:'#b5b5b5'});
  if(big)el(hr,'text',{x:x,y:9,'text-anchor':'middle','font-size':9,'font-family':'Roboto',fill:'#a0a0a0'},m);
}
el(hr,'text',{x:1362,y:9,'font-size':8,'font-family':'Roboto',fill:'#b0b0b0'},'миллиметры');
el(hr,'line',{x1:1049,x2:1049,y1:1,y2:13,stroke:'#333','stroke-dasharray':'2 2'});
for(var v=250;v>=202;v--){
  var y=168-137+(245-v)*S,b=v%5===0;
  if(y<0||y>615)continue;
  el(vr,'line',{x1:b?9:11,x2:13,y1:y,y2:y,stroke:'#b5b5b5'});
  if(b)el(vr,'text',{transform:'translate(8 '+y+') rotate(-90)','text-anchor':'middle','font-size':9,'font-family':'Roboto',fill:'#a0a0a0'},v);
}
el(vr,'line',{x1:0,x2:13,y1:560.5,y2:560.5,stroke:'#333','stroke-dasharray':'2 2'});

var L=['none','#1a1a1a','#333333','#4d4d4d','#666666','#808080','#999999','#aaabad','#c7c8ca','#d9dada','#eeeeee','#ffffff','#3c2c96','#00a6d9','#00a859','#fadd12','#e3281e','#e6008a','#a94a8c','#f57c00','#ffb6c1','#786a60','#d8cfef','#b0a2e0','#7a96d2','#8c70c4','#9490b8','#50648c','#544c68','#708498','#0095d0','#b0daf0','#b4c8d4','#90a4ac','#687478','#404c4c','#4c6864','#488878','#749896','#58ac98','#68a878','#80dce0','#60b0b8','#b8ccbc','#e0fadc','#b8f0bc'];
var R=['#8c9c90','#8c9874','#c0c878','#b8c898','#bcd800','#e8f080','#504c40','#7c7c68','#aca894','#aca878','#dcc870','#fce888','#fef0b0','#fef8dc','#a88c68','#cc9660','#d0ac68','#fc8640','#fca848','#fcb478','#fcc400','#fcd4a0','#786a4c','#a0503c','#c46c30','#fc8458','#fcac8c','#fcdcc8','#a87478','#cc7070','#cc7088','#e41048','#fc8888','#fc5878','#d49aa4','#785868','#a05880','#f4b0d4','#cc98b8','#a898a4','#d4b8c8','#b06ca4','#cc44a4','#d47cc8','#b490bc','#e0a8e8'];
var pal=document.getElementById('pal');
L.concat(R).forEach(function(c){var d=document.createElement('div');if(c==='none')d.className='ap-none';else d.style.background=c;pal.appendChild(d);});
})();
</script>
<script src="https://cdn.jsdelivr.net/npm/bootstrap@5.3.0/dist/js/bootstrap.bundle.min.js"></script>
</body>
</html>
